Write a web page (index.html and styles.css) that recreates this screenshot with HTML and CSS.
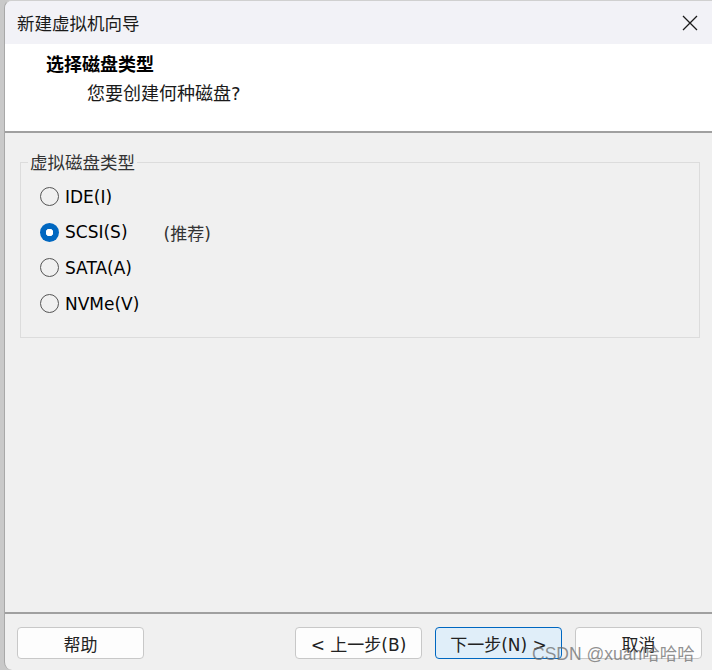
FILE: index.html
```html
<!DOCTYPE html>
<html lang="zh-CN">
<head>
    <meta charset="UTF-8">
    <title>新建虚拟机向导</title>
    <link rel="stylesheet" href="styles.css">
</head>
<body>
    <div class="window">
        <div class="titlebar">
            <span class="title">新建虚拟机向导</span>
            <button class="close" title="关闭">
                <svg width="16" height="16" viewBox="0 0 16 16">
                    <path d="M1 1 L15 15 M15 1 L1 15" stroke="#1a1a1a" stroke-width="1.3" fill="none"/>
                </svg>
            </button>
        </div>

        <div class="header">
            <div class="header-title">选择磁盘类型</div>
            <div class="header-sub">您要创建何种磁盘?</div>
        </div>

        <div class="content">
            <fieldset class="group">
                <legend>虚拟磁盘类型</legend>
                <label class="radio"><span class="dot"></span>IDE(I)</label>
                <label class="radio checked"><span class="dot"></span>SCSI(S)<span class="hint">(推荐)</span></label>
                <label class="radio"><span class="dot"></span>SATA(A)</label>
                <label class="radio"><span class="dot"></span>NVMe(V)</label>
            </fieldset>
        </div>

        <div class="footer">
            <button class="btn">帮助</button>
            <div class="spacer"></div>
            <button class="btn">&lt; 上一步(B)</button>
            <button class="btn primary">下一步(N) &gt;</button>
            <button class="btn">取消</button>
        </div>

        <div class="watermark">CSDN @xuan哈哈哈</div>
    </div>
</body>
</html>
```

FILE: styles.css
```css
html, body {
    margin: 0;
    height: 100%;
    overflow: hidden;
}
body {
    background: #c9c9c9;
    font-family: "DejaVu Sans", "Noto Sans CJK SC", sans-serif;
    color: #000;
}
.window {
    position: relative;
    margin-left: 4px;
    height: 670px;
    display: flex;
    flex-direction: column;
    background: #f0f0f0;
    border-left: 1px solid #a8a8a8;
    border-top: 1px solid #d0d0d0;
    border-radius: 8px 0 0 8px;
    overflow: hidden;
    box-sizing: border-box;
}
.titlebar {
    height: 43px;
    flex: none;
    display: flex;
    align-items: center;
    justify-content: space-between;
    background: #f2f2f7;
}
.title {
    margin-left: 12px;
    font-family: "Noto Sans CJK SC", sans-serif;
    font-size: 17.5px;
    color: #1a1a1a;
}
.close {
    border: none;
    background: none;
    width: 44px;
    height: 43px;
    display: flex;
    align-items: center;
    justify-content: center;
    padding: 0;
}
.header {
    height: 87px;
    flex: none;
    background: #fff;
    border-bottom: 2px solid #a0a0a0;
    font-family: "DejaVu Sans", "Noto Sans CJK SC", sans-serif;
    font-size: 18px;
}
.header-title {
    font-weight: bold;
    margin: 8px 0 0 41px;
    line-height: 26px;
}
.header-sub {
    margin: 3px 0 0 82px;
    line-height: 26px;
    color: #1a1a1a;
}
.content {
    flex: 1;
    padding: 17px 12px 0 15px;
}
.group {
    margin: 0;
    padding: 5px 0 16px 0;
    border: 1px solid #dcdcdc;
    min-height: 0;
}
.group legend {
    font-family: "Noto Sans CJK SC", sans-serif;
    font-size: 17.5px;
    color: #333;
    margin-left: 7px;
    padding: 0 2px;
    line-height: 24px;
}
.radio {
    display: flex;
    align-items: center;
    height: 35.6px;
    padding-left: 19px;
    font-size: 17px;
    color: #000;
}
.dot {
    width: 17px;
    height: 17px;
    border: 1px solid #555;
    border-radius: 50%;
    margin-right: 6px;
    box-sizing: content-box;
    flex: none;
}
.radio.checked .dot {
    width: 19px;
    height: 19px;
    border: none;
    background: radial-gradient(circle, #fff 0 3.5px, #0067c0 4px);
}
.hint {
    margin-left: 36px;
    color: #333;
}
.footer {
    height: 58px;
    box-sizing: border-box;
    flex: none;
    border-top: 2px solid #a0a0a0;
    display: flex;
    align-items: flex-start;
    padding: 13px 10px 0 12px;
    gap: 13px;
}
.spacer {
    flex: 1;
}
.btn {
    width: 127px;
    height: 32px;
    flex: none;
    border: 1px solid #c8c8c8;
    border-radius: 4px;
    background: #fdfdfd;
    font-family: "DejaVu Sans", "Noto Sans CJK SC", sans-serif;
    font-size: 17px;
    color: #222;
    padding: 0;
}
.btn.primary {
    background: #e0eef9;
    border-color: #0067c0;
}
.watermark {
    position: absolute;
    left: 527px;
    top: 639px;
    font-family: "Liberation Sans", "Noto Sans CJK SC", sans-serif;
    font-size: 17.5px;
    color: rgba(110, 110, 110, 0.75);
    white-space: nowrap;
}
```
